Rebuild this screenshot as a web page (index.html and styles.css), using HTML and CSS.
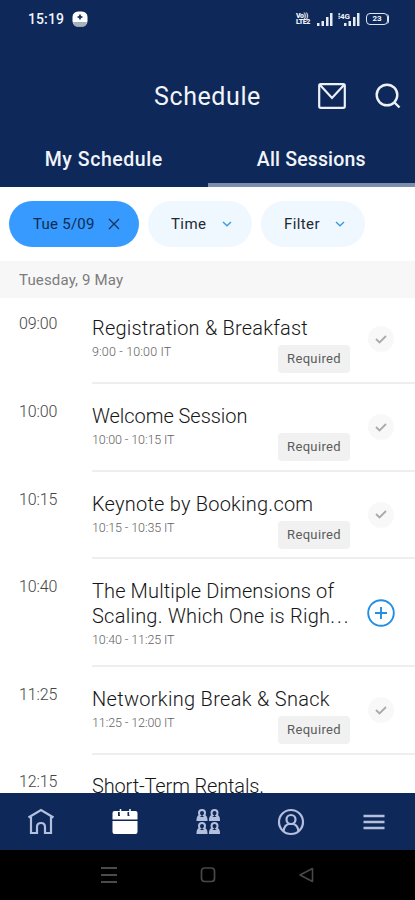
FILE: index.html
```html
<!DOCTYPE html>
<html lang="en">
<head>
<meta charset="utf-8">
<title>Schedule</title>
<link rel="stylesheet" href="styles.css">
</head>
<body>
<div class="app">
  <header class="header">
    <div class="status">
      <span class="clock">15:19</span>
      <svg class="notice" width="16" height="16" viewBox="0 0 16 16"><rect x=".5" y=".5" width="15" height="15" rx="5.500" fill="#fff"/><path d="M1 11h14q-1 4.500-4 4.500H5q-3 0-4-4.500z" fill="#a9b0bd"/><path d="M8 3.500l.8 1.700 1.700.8-1.700.8L8 8.500l-.8-1.700L5.500 6l1.700-.8z" fill="#102a5c" stroke="#102a5c" stroke-width=".7"/></svg>
      <div class="signals">
        <span class="volte"><span>Vo))</span><span>LTE2</span></span>
        <svg width="16" height="13" viewBox="0 0 16 13" fill="#e6eaf2"><path d="M0 10h2.500v3H0zM4.500 8H7v5H4.500zM9 4h2.500v9H9zM13 0h2.500v13H13z"/></svg>
        <span class="network">⁞4G</span>
        <svg class="bars" width="16" height="13" viewBox="0 0 16 13" fill="#e6eaf2"><path d="M0 10h2.500v3H0zM4.500 8H7v5H4.500zM9 4h2.500v9H9zM13 0h2.500v13H13z"/></svg>
        <span class="battery">23</span>
      </div>
    </div>
    <div class="titlebar">
      <h1>Schedule</h1>
      <svg class="mail" width="28" height="26" viewBox="0 0 28 26" fill="none" stroke="#edf0f6" stroke-width="2.200"><rect x="1.200" y="1.200" width="25.600" height="23.600" rx="1.500"/><path d="M2 2l12 13L26 2"/></svg>
      <svg class="search" width="26" height="26" viewBox="0 0 26 26" fill="none" stroke="#edf0f6" stroke-width="2.400"><circle cx="12" cy="12" r="10.300"/><path d="M19 19l5.500 5.500"/></svg>
    </div>
    <nav class="tabs"><span class="tab mine">My Schedule</span><span class="tab all">All Sessions</span></nav>
  </header>
  <div class="filters">
    <span class="chip selected"><span class="day">Tue 5/09</span><svg width="12" height="12" viewBox="0 0 12 12" fill="none" stroke="#14345e" stroke-width="1.300"><path d="M1 1l10 10M11 1L1 11"/></svg></span>
    <span class="chip"><span class="time-label">Time</span><svg width="10" height="6" viewBox="0 0 10 6" fill="none" stroke="#3c9bdc" stroke-width="1.400"><path d="M1 1l4 3.700L9 1"/></svg></span>
    <span class="chip"><span class="filter-label">Filter</span><svg width="10" height="6" viewBox="0 0 10 6" fill="none" stroke="#3c9bdc" stroke-width="1.400"><path d="M1 1l4 3.700L9 1"/></svg></span>
  </div>
  <div class="date"><span>Tuesday, 9 May</span></div>
  <main class="list">
    <section class="row first"><time>09:00</time><div class="session"><div class="copy"><h2 class="t1">Registration &amp; Breakfast</h2><p>9:00 - 10:00 IT</p><span class="required">Required</span></div><span class="check"><svg width="12" height="9" viewBox="0 0 12 9"><path d="M1 4l3.500 3.500L11 1"/></svg></span></div></section>
    <section class="row"><time>10:00</time><div class="session"><div class="copy"><h2 class="t2">Welcome Session</h2><p>10:00 - 10:15 IT</p><span class="required">Required</span></div><span class="check"><svg width="12" height="9" viewBox="0 0 12 9"><path d="M1 4l3.500 3.500L11 1"/></svg></span></div></section>
    <section class="row"><time>10:15</time><div class="session"><div class="copy"><h2 class="t3">Keynote by Booking.com</h2><p>10:15 - 10:35 IT</p><span class="required">Required</span></div><span class="check"><svg width="12" height="9" viewBox="0 0 12 9"><path d="M1 4l3.500 3.500L11 1"/></svg></span></div></section>
    <section class="row tall"><time>10:40</time><div class="session"><div class="copy"><h2 class="t4">The Multiple Dimensions of<br><span class="t5">Scaling. Which One is Righ<span class="dots">...</span></span></h2><p>10:40 - 11:25 IT</p></div><svg class="add" width="28" height="28" viewBox="0 0 28 28" fill="none" stroke="#238ee6" stroke-width="1.900"><circle cx="14" cy="14" r="12.800"/><path d="M14 8v12M8 14h12"/></svg></div></section>
    <section class="row"><time>11:25</time><div class="session"><div class="copy"><h2 class="t6">Networking Break &amp; Snack</h2><p>11:25 - 12:00 IT</p><span class="required">Required</span></div><span class="check"><svg width="12" height="9" viewBox="0 0 12 9"><path d="M1 4l3.500 3.500L11 1"/></svg></span></div></section>
    <section class="row last"><time>12:15</time><div class="session"><div class="copy"><h2 class="t7">Short-Term Rentals.</h2></div></div></section>
  </main>
  <nav class="bottom">
    <svg width="28" height="28" viewBox="0 0 28 28" fill="none" stroke="#b4bfdd" stroke-width="2.200"><path d="M1.500 9.500L14 2l12.500 7.500M4 9v16h6v-6q0-4 4-4t4 4v6h6V9"/></svg>
    <svg width="28" height="28" viewBox="0 0 28 28"><path d="M2.500 5q0-2 2-2h21q2 0 2 2v6.500h-25zM2.500 13h25v11q0 2-2 2h-21q-2 0-2-2z" fill="#fff"/><path d="M9 4v4M18.500 4v4" stroke="#0e2859" stroke-width="2"/><path d="M10.500 1v6M20 1v6" stroke="#fff" stroke-width="1.500"/></svg>
    <svg width="28" height="28" viewBox="0 0 28 28" fill="none" stroke="#b4bfdd" stroke-width="2"><defs><g id="person"><path d="M3 6.500Q2 5.500 2 4q0-3 3-3t3 3q0 1.500-1 2.500 2.500 1 2.500 4.500h-9Q.5 7.500 3 6.500zM1 9h8"/></g></defs><use href="#person" x="3" y="1"/><use href="#person" x="15.500" y="1"/><use href="#person" x="3" y="14"/><use href="#person" x="15.500" y="14"/></svg>
    <svg width="28" height="28" viewBox="0 0 28 28" fill="none" stroke="#b4bfdd" stroke-width="2.200"><circle cx="14" cy="14" r="12"/><circle cx="14" cy="11.500" r="4.500"/><path d="M6.500 23q1-6 5-7h5q4 1 5 7"/></svg>
    <svg width="28" height="28" viewBox="0 0 28 28" stroke="#b4bfdd" stroke-width="2.500"><path d="M3.500 8h21M3.500 14h21M3.500 20h21"/></svg>
  </nav>
  <div class="system">
    <svg width="16" height="18" viewBox="0 0 16 18" stroke="#4b4b4b" stroke-width="2"><path d="M0 2h16M0 9h16M0 16h16"/></svg>
    <svg width="16" height="18" viewBox="0 0 16 18" fill="none" stroke="#484848" stroke-width="1.700"><rect x="1.500" y="2" width="13" height="13.500" rx="3"/></svg>
    <svg width="16" height="18" viewBox="0 0 16 18" fill="none" stroke="#484848" stroke-width="1.600" stroke-linejoin="round"><path d="M1 9l12.500-6.500v13z"/></svg>
  </div>
</div>
</body>
</html>
```

FILE: styles.css
```css
* { box-sizing: border-box; }
body { margin: 0; font-family: Roboto, "Noto Sans", sans-serif; background: #fff; color: #222; }
h1, h2, p { margin: 0; font-weight: 400; }
svg { display: block; flex: none; }
.app { width: 415px; height: 900px; display: flex; flex-direction: column; overflow: hidden; white-space: nowrap; }

.header { height: 187px; flex: none; background: #0e2859; color: #f1f4f9; display: flex; flex-direction: column; }
.status { height: 38px; padding: 0 26px 0 28px; display: flex; align-items: center; }
.clock { font-size: 14px; font-weight: 500; width: 44px; letter-spacing: .1px; }
.signals { margin-left: auto; display: flex; align-items: center; }
.volte { width: 16px; margin-right: 5px; font-size: 7px; line-height: 6.5px; font-weight: 900; display: flex; flex-direction: column; letter-spacing: -.4px; }
.network { font-size: 8px; line-height: 11px; height: 16px; width: 14px; margin-left: 5px; font-weight: 700; letter-spacing: -.2px; }
.bars { margin-left: -8px; }
.battery { width: 22px; height: 12px; margin-left: 6px; margin-right: 1px; border: 1.5px solid #dfe5ef; border-radius: 4px; font-size: 8px; line-height: 9px; text-align: center; font-weight: 700; box-shadow: 2px 0 0 -1px #dfe5ef; }
.titlebar { height: 92px; padding: 23px 14px 0 154px; display: flex; align-items: center; }
.titlebar h1 { width: 164px; font-size: 25px; line-height: 32px; letter-spacing: .6px; padding-top: 2px; }
.search { margin-left: 29px; }
.tabs { display: flex; height: 57px; }
.tab { flex: 1; padding-top: 18px; line-height: 24px; font-size: 19.5px; font-weight: 500; text-align: center; }
.mine { letter-spacing: .55px; }
.all { letter-spacing: .15px; border-bottom: 4px solid #7f8dac; }

.filters { height: 74px; flex: none; padding: 14px 9px; display: flex; gap: 9px; background: #fff; }
.chip { width: 104px; height: 46px; border-radius: 23px; background: #eff7ff; display: flex; align-items: center; justify-content: space-between; padding: 0 20px 0 23px; font-size: 15px; color: #222a32; }
.chip.selected { width: 130px; padding: 0 19px 0 24px; background: #369aff; color: #102c51; }
.day { letter-spacing: .25px; }
.time-label { letter-spacing: .4px; }
.filter-label { letter-spacing: .4px; }
.date { height: 37px; flex: none; padding: 0 19px; background: #f7f7f7; color: #7c7c7c; font-size: 15px; line-height: 38px; letter-spacing: .15px; }

.list { flex: 1; min-height: 0; overflow: hidden; }
.row { display: flex; height: 87.6px; padding: 19px 0 0 19px; }
.row.first { height: 86px; padding-top: 17.4px; }
.row.tall { height: 108px; }
.row.last { padding-top: 18px; }
.row time { width: 73px; font-size: 16px; line-height: 17px; font-weight: 300; color: #444; letter-spacing: -.1px; }
.session { flex: 1; display: flex; border-bottom: 2px solid #eee; }
.copy { width: 258px; display: flex; flex-direction: column; }
.copy h2 { font-size: 20px; line-height: 25px; font-weight: 300; color: #161616; padding-top: 1px; }
.t1 { letter-spacing: .2px; }
.t2 { letter-spacing: -.05px; }
.t3 { letter-spacing: .22px; }
.t4 { letter-spacing: .12px; }
.t5 { letter-spacing: .25px; }
.dots { letter-spacing: 2px; }
.t6 { letter-spacing: .3px; }
.t7 { letter-spacing: -.15px; }
.copy p { font-size: 12.5px; line-height: 15px; margin-top: 3px; font-weight: 300; color: #626262; letter-spacing: -.1px; }
.row:first-child p { letter-spacing: .15px; }
.required { align-self: flex-end; width: 72px; height: 28px; margin-top: -14px; border-radius: 4px; background: #f1f1f1; color: #5c5c5c; text-align: center; font-size: 13px; line-height: 28px; letter-spacing: .35px; }
.check { width: 26px; height: 26px; margin: 11px 0 0 18px; border-radius: 50%; background: #f8f8f8; display: flex; align-items: center; justify-content: center; }
.check path { fill: none; stroke: #aaa; stroke-width: 1.8; }
.add { margin: 20.5px 0 0 17px; }

.bottom { height: 57px; flex: none; background: #0e2859; display: flex; justify-content: space-between; align-items: center; padding: 0 27px; }
.system { height: 50px; flex: none; background: #000; display: flex; justify-content: space-between; align-items: center; padding: 0 100px 0 101px; }
```
